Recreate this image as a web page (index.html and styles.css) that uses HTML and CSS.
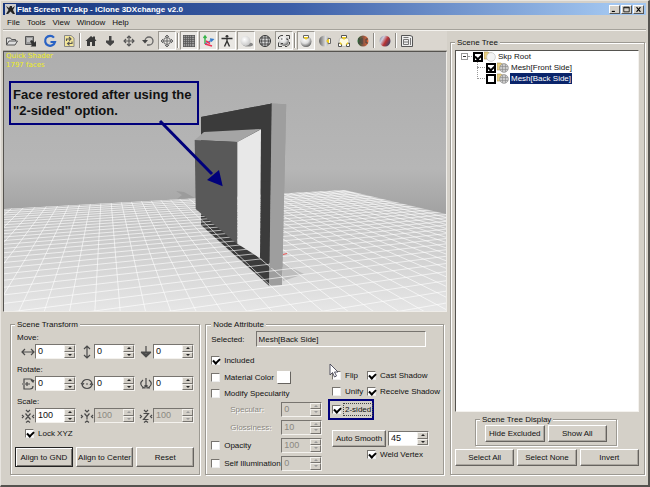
FILE: index.html
```html
<!DOCTYPE html>
<html lang="en">
<head>
<meta charset="utf-8">
<title>Flat Screen TV.skp - iClone 3DXchange v2.0</title>
<link rel="stylesheet" href="styles.css">
</head>
<body>
<svg class="defs" aria-hidden="true">
  <defs>
    <radialGradient id="ball" cx=".4" cy=".3" r=".75"><stop offset="0" stop-color="#fff"/><stop offset=".5" stop-color="#ddd"/><stop offset="1" stop-color="#555"/></radialGradient>
    <radialGradient id="pale" cx=".4" cy=".35" r=".8"><stop offset="0" stop-color="#fff"/><stop offset="1" stop-color="#bbb"/></radialGradient>
    <linearGradient id="side"><stop offset="0" stop-color="#666"/><stop offset=".6" stop-color="#ddd"/><stop offset="1" stop-color="#aaa"/></linearGradient>
    <linearGradient id="warm"><stop offset="0" stop-color="#263"/><stop offset=".5" stop-color="#854"/><stop offset="1" stop-color="#e63"/></linearGradient>
    <linearGradient id="redblue" x2="1" y2=".6"><stop offset="0" stop-color="#778"/><stop offset=".35" stop-color="#ccd"/><stop offset=".65" stop-color="#b33"/><stop offset="1" stop-color="#446"/></linearGradient>
  </defs>
  <symbol id="meshicon" viewBox="0 0 12 11"><path d="M0 1h4l1 1h3v6H0z" fill="#e8cf82" stroke="#aa9252" stroke-width=".6"/><circle cx="7" cy="6" r="4.400" fill="#ccc" stroke="#888" stroke-width=".6"/><path d="M3 4.500h8M3 7.500h8M5.500 2v8M8.500 2v8" stroke="#888" stroke-width=".6"/></symbol>
</svg>
<div class="window">
  <header class="titlebar">
    <svg class="appicon" viewBox="0 0 11 11"><path d="M0 0h11v11H0z" fill="#ccc"/><path d="M1 2l3 2 1-2h2v2l3-2-2 4 2 4H8L5.500 7.500 3 10H1l2.500-4z" fill="#222"/></svg>
    <h1>Flat Screen TV.skp - iClone 3DXchange v2.0</h1>
    <div class="winbuttons">
      <button type="button" aria-label="Minimize"><svg viewBox="0 0 9 7"><path d="M1 6h4" stroke="#000" stroke-width="1.500"/></svg></button>
      <button type="button" aria-label="Maximize"><svg viewBox="0 0 9 7"><path d="M1 .5h7v6H1zM1 1.300h7" fill="none" stroke="#000"/></svg></button>
      <button type="button" aria-label="Close"><svg viewBox="0 0 9 7"><path d="M2 .5l5 6M7 .5l-5 6" stroke="#000" stroke-width="1.400"/></svg></button>
    </div>
  </header>
  <nav class="menu"><a href="#">File</a><a href="#">Tools</a><a href="#">View</a><a href="#">Window</a><a href="#">Help</a></nav>
  <div class="main">
    <div class="left">
      <div class="toolbar">
        <button type="button" aria-label="Open"><svg viewBox="0 0 14 14"><path d="M1.500 11V4h4l1 1.500h4V7M1.500 11l2.500-4h8.500l-2.500 4z" fill="#ddd" stroke="#555"/></svg></button>
        <button type="button" aria-label="Export"><svg viewBox="0 0 14 14"><path d="M1.500 2.500h8v8h-8z" fill="#999" stroke="#555"/><path d="M3 5h5M3 7h5" stroke="#eee"/><path d="M6 7l2-1 2.500 2.500L12 7v5.500H6.500L8 11z" fill="#333"/></svg></button>
        <button type="button" aria-label="Google 3D Warehouse"><svg viewBox="0 0 14 14"><path d="M11 3.600A5 5 0 1 0 12 8H7.500" fill="none" stroke="#2962c4" stroke-width="2.200"/></svg></button>
        <button type="button" aria-label="Refresh"><svg viewBox="0 0 14 14"><path d="M2.500 1.500H9L12 4v8.500H2.500z" fill="#f4e69a" stroke="#888"/><path d="M4.500 7V5h4M7 3l2 2-2 1.800M10 7.500v2H6M7.500 7.800L5.500 9.500l2 1.800" fill="none" stroke="#555" stroke-width="1.100"/></svg></button>
        <i class="sep"></i>
        <button type="button" aria-label="Home"><svg viewBox="0 0 14 14"><path d="M1.500 7L7 2l2 1.500V2.500h2V5l1.500 2H11v5H8V8H6v4H3V7z" fill="#3a3a3a"/></svg></button>
        <button type="button" aria-label="Drop down"><svg viewBox="0 0 14 14"><path d="M6 2h2.500v4.500H11v2L7.200 12 3 8.500v-2h3z" fill="#444"/></svg></button>
        <button type="button" aria-label="Pan"><svg viewBox="0 0 14 14"><path d="M7 2v10M2 7h10M5 4l2-2 2 2M5 10l2 2 2-2M4 5L2 7l2 2M10 5l2 2-2 2" fill="none" stroke="#555" stroke-width="1.100"/></svg></button>
        <button type="button" aria-label="Rotate"><svg viewBox="0 0 14 14"><path d="M4 7a4 4 0 1 1 4 4H6" fill="none" stroke="#666" stroke-width="1.300"/><path d="M1 6h6L4 9.500z" fill="#444"/></svg></button>
        <button type="button" class="on" aria-label="Orbit"><svg viewBox="0 0 14 14"><path d="M7 1v12M1 7h12M5 3l2-2 2 2M5 11l2 2 2-2M3 5L1 7l2 2M11 5l2 2-2 2" fill="none" stroke="#666"/><circle cx="7" cy="7" r="3.500" fill="none" stroke="#666"/></svg></button>
        <i class="sep"></i>
        <button type="button" class="on" aria-label="Grid"><svg viewBox="0 0 14 14"><path d="M1 1h12v12H1z" fill="#999"/><path d="M1.500 1v12M3.500 1v12M5.500 1v12M7.500 1v12M9.500 1v12M12.500 1v12M1 1.500h12M1 3.500h12M1 5.500h12M1 7.500h12M1 9.500h12M1 12.500h12" stroke="#555" stroke-width=".7"/></svg></button>
        <button type="button" class="on" aria-label="Axes"><svg viewBox="0 0 14 14"><path d="M4 10V2M2.500 4L4 2l1.500 2" fill="none" stroke="#37b34a" stroke-width="1.400"/><path d="M4 10l7-4M9 5l3 .5-2 2" fill="none" stroke="#357ccc" stroke-width="1.400"/><path d="M4 10l7 2M5 7l4 2.500" fill="none" stroke="#e35" stroke-width="1.600"/></svg></button>
        <button type="button" class="on" aria-label="Dummy"><svg viewBox="0 0 14 14"><circle cx="7" cy="2.300" r="1.400" fill="#333"/><path d="M1.500 4.500h11M7 4v4M7 7l-2.500 5.500M7 7l2.500 5.500" stroke="#333" stroke-width="1.400"/></svg></button>
        <button type="button" class="on" aria-label="Smooth shading"><svg viewBox="0 0 14 14"><ellipse cx="9" cy="10.500" rx="5" ry="2" fill="#888"/><circle cx="6.500" cy="7" r="5" fill="url(#pale)"/></svg></button>
        <button type="button" aria-label="Wireframe"><svg viewBox="0 0 14 14"><circle cx="7" cy="7" r="5.500" fill="#ddd" stroke="#333"/><path d="M7 1.500v11M1.500 7h11M2.500 4h9M2.500 10h9M4.300 2.500q-1.500 4.500 0 9M9.700 2.500q1.500 4.500 0 9" fill="none" stroke="#333" stroke-width=".8"/></svg></button>
        <button type="button" class="on" aria-label="Bounding box"><svg viewBox="0 0 14 14"><circle cx="7" cy="7" r="5" fill="url(#ball)"/><path d="M1.500 5V3L4 1.500h2M9 1.500h3.500V5M12.500 8v2L10 12.500H8M5 12.500H1.500V8.500M4 5h1.500M9 5h1.500v1M4 9.500h2" fill="none" stroke="#444"/></svg></button>
        <i class="sep"></i>
        <button type="button" class="on" aria-label="Top light"><svg viewBox="0 0 14 14"><circle cx="7" cy="7.500" r="5.500" fill="url(#ball)"/><path d="M4.500 1.500h5v2.500h-5z" fill="#fff" stroke="#666"/><path d="M4.500 3h5L7 6z" fill="#ec2"/></svg></button>
        <button type="button" aria-label="Side light"><svg viewBox="0 0 14 14"><circle cx="6.500" cy="7" r="5.500" fill="url(#side)"/><path d="M10 4.500h2.500v5H10z" fill="#fff" stroke="#666"/><path d="M11 4.500v5L8 7z" fill="#ec2"/></svg></button>
        <button type="button" aria-label="Three lights"><svg viewBox="0 0 14 14"><circle cx="7" cy="7.500" r="5" fill="#fffbe0" stroke="#bbb"/><path d="M4.500 1.500h5v2.500h-5zM1.500 9l3 1v2.500h-3zM12.500 9l-3 1v2.500h3z" fill="#fff" stroke="#555"/><path d="M4.500 3h5L7 6zM3.500 8l2 3-3-1zM10.500 8l-2 3 3-1z" fill="#ec2"/></svg></button>
        <button type="button" aria-label="Color lights"><svg viewBox="0 0 14 14"><circle cx="7" cy="7" r="5.500" fill="url(#warm)"/><path d="M2 5h2v4H2M12 5h-2v4h2M6 4v6" fill="none" stroke="#444"/></svg></button>
        <i class="sep"></i>
        <button type="button" aria-label="Material"><svg viewBox="0 0 14 14"><circle cx="7" cy="7" r="5.500" fill="url(#redblue)"/></svg></button>
        <i class="sep"></i>
        <button type="button" aria-label="Preferences"><svg viewBox="0 0 14 14"><path d="M1.500 1.500h8.500l2.500 1v10h-11z" fill="#eee" stroke="#555"/><path d="M3.500 5.500h5v5h-5zM3.500 8h5M10.500 4v7M3.500 3.500h5" fill="none" stroke="#777"/></svg></button>
      </div>
      <div class="viewport">
        <svg class="scene" viewBox="4 51 442 259" role="img" aria-label="3D view of a flat screen model">
          <defs>
            <linearGradient id="sky" x2="0" y2="1"><stop offset="0" stop-color="#aeaeae"/><stop offset=".45" stop-color="#b6b6b6"/><stop offset=".62" stop-color="#a2a2a2"/></linearGradient>
            <linearGradient id="floor" x2="0" y2="1"><stop offset="0" stop-color="#bcbcbc"/><stop offset=".45" stop-color="#cdcdcd"/><stop offset="1" stop-color="#e6e6e6"/></linearGradient>
            <clipPath id="ground"><path d="M4 208L345 189 446 213V310H4z"/></clipPath>
          </defs>
          <path d="M4 51h442v259H4z" fill="url(#sky)"/>
          <path d="M4 208L345 189 446 213V310H4z" fill="url(#floor)"/>
          <path d="M176 190l8 1 11 6-18 1 5-4z" fill="#9c9c9c"/>
          <path d="M282 262l22 11-21 7z" fill="#bdbdbd"/>
          <path d="M201 116L272 102.500 269.300 285 201 224z" fill="#3b3b3b"/>
          <path d="M271.700 102.500l14.500.8L282 284l-12.700.8z" fill="#9e9e9e"/>
          <g id="gridlines" clip-path="url(#ground)" stroke="#fff" stroke-opacity=".7" stroke-width=".9"></g>
          <path d="M261 128L272 102.500 270 262 260 257z" fill="#3b3b3b"/>
          <path d="M201 185V116L272 102.500 270 180z" fill="#3b3b3b"/>
          <path d="M271.700 102.500l14.500.8L282.500 266 269.500 267z" fill="#9e9e9e"/>
          <path d="M194.700 139L204 131l57-3-23.700 13z" fill="#a5a5a5"/>
          <path d="M194.700 139l42.600 2v102L195.700 208z" fill="#595959"/>
          <path d="M237.300 141L261 128.300 260 257 237.300 242.700z" fill="#e8e8e8"/>
          <path d="M283 253.500l4-1" stroke="#e55"/>
          <path d="M160 120l52 53" stroke="#00007b" stroke-width="3"/>
          <path d="M222.700 185.300L207 179l12-10z" fill="#00007b"/>
        </svg>
        <p class="stats">Quick Shader<br>1797 faces</p>
        <p class="note">Face restored after using the "2-sided" option.</p>
      </div>
      <div class="panels">
        <fieldset class="group transform">
          <legend>Scene Transform</legend>
          <h2>Move:</h2>
          <div class="axes" id="move"></div>
          <h2>Rotate:</h2>
          <div class="axes" id="rotate"></div>
          <h2>Scale:</h2>
          <div class="axes" id="scale"></div>
          <label class="check lock"><input type="checkbox" checked>Lock XYZ</label>
          <div class="buttons"><button type="button" class="btn default">Align to GND</button><button type="button" class="btn">Align to Center</button><button type="button" class="btn">Reset</button></div>
        </fieldset>
        <fieldset class="group node">
          <legend>Node Attribute</legend>
          <div class="selected"><label for="sel">Selected:</label><input id="sel" type="text" readonly value="Mesh[Back Side]"></div>
          <div class="columns">
            <div class="attrs">
              <div class="row"><label class="check"><input type="checkbox" checked>Included</label></div>
              <div class="row"><label class="check"><input type="checkbox">Material Color</label><button type="button" class="swatch" aria-label="Pick material color"></button></div>
              <div class="row short"><label class="check"><input type="checkbox">Modify Specularity</label></div>
              <div class="row tall"><label class="sub" for="spec">Specular:</label><span class="spin off"><input id="spec" type="text" value="0" disabled><span class="arrows"><button type="button" disabled aria-label="Up"></button><button type="button" disabled aria-label="Down"></button></span></span></div>
              <div class="row tall"><label class="sub" for="gloss">Glossiness:</label><span class="spin off"><input id="gloss" type="text" value="10" disabled><span class="arrows"><button type="button" disabled aria-label="Up"></button><button type="button" disabled aria-label="Down"></button></span></span></div>
              <div class="row tall"><label class="check"><input type="checkbox">Opacity</label><span class="spin off"><input type="text" aria-label="Opacity" value="100" disabled><span class="arrows"><button type="button" disabled aria-label="Up"></button><button type="button" disabled aria-label="Down"></button></span></span></div>
              <div class="row tall"><label class="check"><input type="checkbox">Self Illumination</label><span class="spin off"><input type="text" aria-label="Self illumination" value="0" disabled><span class="arrows"><button type="button" disabled aria-label="Up"></button><button type="button" disabled aria-label="Down"></button></span></span></div>
            </div>
            <div class="faces">
              <div class="pair"><label class="check"><input type="checkbox">Flip</label><label class="check"><input type="checkbox" checked>Cast Shadow</label></div>
              <div class="pair"><label class="check"><input type="checkbox">Unify</label><label class="check"><input type="checkbox" checked>Receive Shadow</label></div>
              <div class="framed"><label class="check"><input type="checkbox" checked><span class="focus">2-sided</span></label></div>
              <div class="smooth"><button type="button" class="btn">Auto Smooth</button><span class="spin"><input type="text" aria-label="Smooth angle" value="45"><span class="arrows"><button type="button" aria-label="Up"></button><button type="button" aria-label="Down"></button></span></span></div>
              <label class="check weld"><input type="checkbox" checked>Weld Vertex</label>
              <svg class="cursor" viewBox="0 0 10 15"><path d="M1 1v11l2.500-2.500L5.500 14l2-1-2-4H9z" fill="#fff" stroke="#445" stroke-width=".9"/></svg>
            </div>
          </div>
        </fieldset>
      </div>
    </div>
    <fieldset class="group side">
      <legend>Scene Tree</legend>
      <ul class="tree">
        <li><span class="expander"></span><label class="node-label"><input type="checkbox" checked><svg viewBox="0 0 12 11"><path d="M0 1h4l1 1h3v6H0z" fill="#e8cf82" stroke="#aa9252" stroke-width=".6"/><circle cx="7" cy="6" r="4.400" fill="#f4f4f4" stroke="#bbb" stroke-width=".6"/></svg><span>Skp Root</span></label>
          <ul>
            <li><label class="node-label"><input type="checkbox" checked><svg><use href="#meshicon"/></svg><span>Mesh[Front Side]</span></label></li>
            <li><label class="node-label"><input type="checkbox"><svg><use href="#meshicon"/></svg><span class="current">Mesh[Back Side]</span></label></li>
          </ul>
        </li>
      </ul>
      <fieldset class="group display">
        <legend>Scene Tree Display</legend>
        <div class="buttons"><button type="button" class="btn">Hide Excluded</button><button type="button" class="btn">Show All</button></div>
      </fieldset>
      <div class="buttons selects"><button type="button" class="btn">Select All</button><button type="button" class="btn">Select None</button><button type="button" class="btn">Invert</button></div>
    </fieldset>
  </div>
</div>
<script src="scene.js"></script>
</body>
</html>
```
FILE: styles.css
```css
* { box-sizing: border-box; }
body { margin: 0; background: #d4d0c8; }
body, button, input { font-family: "Liberation Sans", Arial, sans-serif; font-size: 8px; line-height: 11px; color: #111; }
h1, h2, p, ul { margin: 0; padding: 0; font-size: inherit; font-weight: normal; list-style: none; }
button, input { margin: 0; padding: 0; border-radius: 0; }
a { color: inherit; text-decoration: none; }
svg { display: block; }
.defs { position: absolute; width: 0; height: 0; }

.window { min-height: 100vh; display: flex; flex-direction: column; padding: 2px; border: 1px solid; border-color: #e8e5e0 #55534f #55534f #e8e5e0; border-width: 1px 2px 2px 1px; }
.titlebar { display: flex; align-items: center; height: 12px; padding: 0 2px; background: linear-gradient(90deg, #16357c, #3d5fa8 45%, #a2c6f0 95%); color: #fff; }
.appicon { width: 11px; height: 11px; margin-right: 1px; }
.titlebar h1 { flex: 1; font-weight: bold; }
.winbuttons { display: flex; gap: 1px; }
.winbuttons button { width: 11px; height: 9px; padding: 0 1px; background: #d4d0c8; border: 1px solid; border-color: #fff #555 #555 #fff; }
.winbuttons svg { width: 7px; height: 7px; }
.menu { display: flex; gap: 7px; padding: 2px 4px 1px; border-bottom: 1px solid #a5a29b; }

.main { flex: 1; display: flex; gap: 3px; border-top: 1px solid #f4f2ee; }
.left { flex: 1; min-width: 0; display: flex; flex-direction: column; }
.toolbar { display: flex; gap: 1px; height: 20px; background: #dad6cf; border-bottom: 1px solid #b0ada6; }
.toolbar button { width: 18px; height: 19px; display: grid; place-items: center; background: none; border: 1px solid transparent; }
.toolbar button.on { background: #e9e7e3; border-color: #9b9891 #fff #fff #9b9891; }
.toolbar svg { width: 14px; height: 14px; }
.sep { width: 2px; margin: 2px 0; border-left: 1px solid #8d8a84; border-right: 1px solid #fff; }

.viewport { position: relative; border: 1px solid; border-color: #55534f #efede9 #efede9 #55534f; }
.scene { width: 100%; height: auto; }
.stats { position: absolute; left: 2px; top: 0; font: 7px/9px "DejaVu Sans", sans-serif; color: #ee2; }
.note { position: absolute; left: 5px; top: 29px; width: 190px; padding: 4px 2px; border: 2px solid #00007b; font: bold 13px/16px "Liberation Sans", Arial, sans-serif; }

.group { min-width: 0; margin: 0; padding: 0; border: 1px solid #9c9992; box-shadow: 1px 1px #fff, inset 1px 1px #fff; }
.group legend { padding: 0 2px; background: #d4d0c8; }
.panels { flex: 1; display: flex; gap: 5px; padding: 7px 3px 8px 7px; }
.transform { flex: 187; padding: 2px 5px 0 4px; }
.transform h2 { margin-left: 2px; }
.axes { display: flex; gap: 4px; margin: 1px 0 5px 6px; }
.axis { display: flex; align-items: center; }
.axis svg { width: 14px; height: 14px; }
.node { flex: 242; padding: 1px 0 0 5px; }

.spin { flex: none; display: flex; width: 41px; height: 15px; background: #fff; border: 1px solid; border-color: #77746f #f4f2ee #f4f2ee #77746f; }
.spin input { flex: 1; min-width: 0; padding-left: 2px; background: none; border: 0; font-size: 9px; }
.arrows { display: flex; flex-direction: column; width: 11px; }
.arrows button { flex: 1; min-height: 0; display: grid; place-items: center; background: #d4d0c8; border: 1px solid; border-color: #f4f2ee #77746f #77746f #f4f2ee; }
.arrows button::before { content: ""; border: 2px solid transparent; border-top: 0; border-bottom: 2px solid #222; }
.arrows button + button::before { border-bottom: 0; border-top: 2px solid #222; }
.off { background: #d4d0c8; }
.off input { color: #8b8881; }
.off .arrows button::before, .off .arrows button + button::before { border-bottom-color: #999; border-top-color: #999; }

input[type="checkbox"] { appearance: none; flex: none; width: 9px; height: 9px; background: #fff; border: 1px solid; border-color: #77746f #eee #eee #77746f; }
input[type="checkbox"]:checked::before { content: ""; display: block; width: 5px; height: 3px; margin: 1px; border: solid #000; border-width: 0 0 2px 2px; transform: rotate(-45deg); }
.check { display: flex; align-items: center; gap: 4px; white-space: nowrap; }
.lock { margin: 0 0 8px 10px; }

.buttons { display: flex; gap: 3px; }
.btn { flex: 1; height: 17px; white-space: nowrap; background: #d4d0c8; border: 1px solid; border-color: #fff #66635f #66635f #fff; box-shadow: inset -1px -1px #aaa69f; }
.transform .btn { height: 20px; }
.transform .default { border-color: #222; box-shadow: inset 1px 1px #fff, inset -1px -1px #77746f; }

.selected { display: flex; align-items: center; gap: 11px; padding-right: 17px; }
.selected input { flex: 1; min-width: 0; height: 16px; padding: 0 2px; background: none; border: 1px solid; border-color: #77746f #fff #fff #77746f; }
.columns { display: flex; justify-content: space-between; margin-top: 5px; }
.attrs { width: 111px; }
.row { display: flex; align-items: center; justify-content: space-between; height: 17px; }
.row.short { height: 14px; }
.row.tall { height: 18px; }
.sub { margin-left: 19px; color: #8b8881; text-shadow: 1px 1px #fff; }
.swatch { flex: none; width: 14px; height: 13px; margin-right: 31px; background: #fff; border: 1px solid; border-color: #fff #66635f #66635f #fff; }
.faces { position: relative; width: 115px; padding-top: 15px; }
.pair { display: grid; grid-template-columns: 35px 1fr; height: 16px; padding-left: 4px; }
.framed { display: flex; width: 46px; height: 21px; padding-left: 2px; border: 2px solid #00007b; }
.focus { margin-left: -1px; padding: 0 1px; outline: 1px dotted #444; }
.smooth { display: flex; align-items: center; gap: 2px; margin: 10px 14px 2px 4px; }
.weld { margin-left: 39px; }
.cursor { position: absolute; left: 1px; top: 11px; width: 10px; height: 15px; }

.side { flex: none; width: 195px; display: flex; flex-direction: column; margin: 6px 1px 8px 0; padding: 2px 5px 8px 4px; }
.tree { flex: 1; padding: 0 4px; background: #fff; border: 1px solid; border-color: #55534f #f4f2ee #f4f2ee #55534f; }
.tree > li { position: relative; padding-left: 13px; }
.tree ul { position: relative; padding-left: 13px; }
.tree ul::before { content: ""; position: absolute; left: 4px; top: 0; height: 17px; border-left: 1px dotted #999; }
.tree ul li { position: relative; }
.tree ul li::before { content: ""; position: absolute; left: -9px; top: 5px; width: 8px; border-top: 1px dotted #999; }
.expander { position: absolute; left: 1px; top: 2px; width: 7px; height: 7px; border: 1px solid #999; background: linear-gradient(#333, #333) center / 3px 1px no-repeat; }
.expander::after { content: ""; position: absolute; left: 6px; top: 2px; width: 4px; border-top: 1px dotted #999; }
.node-label { display: flex; align-items: center; height: 11px; }
.node-label input[type="checkbox"] { width: 10px; height: 10px; border: 2px solid #000; }
.node-label input[type="checkbox"]:checked::before { margin: 0; }
.node-label svg { width: 12px; height: 11px; margin-left: 1px; }
.node-label span { padding: 0 1px; margin-left: 1px; }
.node-label .current { color: #fff; background: #0a246a; }
.display { margin: 2px 22px 3px 20px; padding: 0 9px 3px; }
.display legend { margin-left: -5px; }
```
FILE: scene.js
```js
const NS = 'http://www.w3.org/2000/svg';
const grid = document.getElementById('gridlines');
const line = (x1, y1, x2, y2) => {
  const el = document.createElementNS(NS, 'line');
  Object.entries({ x1, y1, x2, y2 }).forEach(([k, v]) => el.setAttribute(k, v));
  grid.append(el);
};
// Floor grid in two-point perspective: both families meet on the horizon.
const horizon = 127;
const near = { x: 105 }, far = { x: 1450 };
for (let k = -16; k <= 28; k++) {
  const x = 95 + 25 * k;
  line(near.x, horizon, near.x + (x - near.x) * 1.1, horizon + 181 * 1.1);
}
for (let n = 0; n <= 32; n++) {
  const y = horizon + 1 / (0.013238 - 0.00031 * n);
  const slope = (horizon - y) / (far.x - 100);
  line(0, y - slope * 100, far.x, horizon);
}

const icons = {
  move: ['M1 7h12M4 4L1 7l3 3M10 4l3 3-3 3', 'M7 1v12M4 4l3-3 3 3M4 10l3 3 3-3', 'M7 1v10M2 7h10M3 8l4 4 4-4zM4.500 8L7 11l2.500-3'],
  rotate: ['M3 6V2h6q3 0 3 3M10 3l2 2 1-2M3 8v4h6q3 0 3-3M1 7h8M6 5v4', 'M2 7a5 4.500 0 0 1 10 0a5 4.500 0 0 1-10 0M1 6l1.500 2L4 6M10 8l1.500-2L13 8M6 7h2', 'M7 1v9M4 3q-5 4 1 8M10 3q5 4-1 8M3 11h3V8M11 11H8V8'],
  scale: ['X', 'Y', 'Z']
};
const values = { move: 0, rotate: 0, scale: 100 };
for (const [kind, shapes] of Object.entries(icons)) {
  document.getElementById(kind).innerHTML = shapes.map((s, i) => {
    const off = kind === 'scale' && i > 0;
    const dis = off ? ' disabled' : '';
    const marks = { X: 'M4.500 4.500l5 6M9.500 4.500l-5 6', Y: 'M4.500 4.500L7 7.500l2.500-3M7 7.500v3', Z: 'M4.500 4.500h5l-5 6h5' };
    const d = marks[s] ? marks[s] + 'M1 6l1.500 1.500L1 9M13 6l-1.500 1.500L13 9M5 1l2 2 2-2M5 13.500l2-1.500 2 1.500' : s;
    return `<div class="axis"><svg viewBox="0 0 14 14"><path d="${d}" fill="none" stroke="#4a4a4a" stroke-width="1.200"/></svg>` +
      `<span class="spin${off ? ' off' : ''}"><input type="text" aria-label="${kind} ${'XYZ'[i]}" value="${values[kind]}"${dis}>` +
      `<span class="arrows"><button type="button" aria-label="Up"${dis}></button><button type="button" aria-label="Down"${dis}></button></span></span></div>`;
  }).join('');
}
```
